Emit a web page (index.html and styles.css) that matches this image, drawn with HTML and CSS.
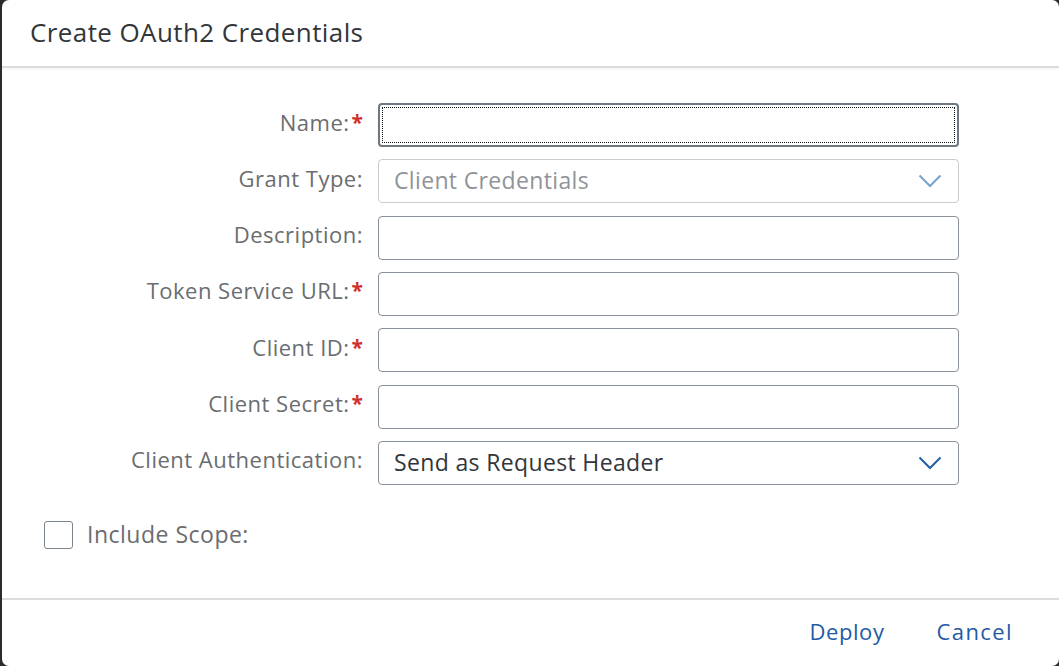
FILE: index.html
```html
<!DOCTYPE html>
<html>
<head>
<meta charset="utf-8">
<link rel="stylesheet" href="styles.css">
</head>
<body>
<div class="dialog">
  <header class="dlg-header">
    <h1 class="dlg-title">Create OAuth2 Credentials</h1>
  </header>
  <main class="dlg-body">
    <div class="form">
      <label class="lbl">Name:<span class="req">*</span></label>
      <div class="field focus"><span class="focus-ring"></span></div>

      <label class="lbl">Grant Type:</label>
      <div class="field select disabled">
        <span class="val">Client Credentials</span>
        <svg class="chev" viewBox="0 0 24 14" width="24" height="14"><path d="M1.5 1.5 L12 12 L22.5 1.5" fill="none" stroke="currentColor" stroke-width="2"/></svg>
      </div>

      <label class="lbl">Description:</label>
      <div class="field"></div>

      <label class="lbl">Token Service URL:<span class="req">*</span></label>
      <div class="field"></div>

      <label class="lbl">Client ID:<span class="req">*</span></label>
      <div class="field"></div>

      <label class="lbl">Client Secret:<span class="req">*</span></label>
      <div class="field"></div>

      <label class="lbl">Client Authentication:</label>
      <div class="field select">
        <span class="val">Send as Request Header</span>
        <svg class="chev" viewBox="0 0 24 14" width="24" height="14"><path d="M1.5 1.5 L12 12 L22.5 1.5" fill="none" stroke="currentColor" stroke-width="2"/></svg>
      </div>
    </div>
    <div class="check-row">
      <span class="checkbox"></span>
      <span class="check-label">Include Scope:</span>
    </div>
  </main>
  <footer class="dlg-footer">
    <button class="btn">Deploy</button>
    <button class="btn btn-wide">Cancel</button>
  </footer>
</div>
</body>
</html>
```
FILE: styles.css
```css
* { box-sizing: border-box; }
html, body { margin: 0; padding: 0; }
body {
  background: #2b2b2b;
  font-family: "Open Sans", "Liberation Sans", sans-serif;
  width: 1059px;
  height: 666px;
  overflow: hidden;
}
.dialog {
  margin-left: 2px;
  width: 1057px;
  height: 666px;
  background: #fff;
  border-radius: 7px;
  display: flex;
  flex-direction: column;
}
.dlg-header {
  height: 68px;
  border-bottom: 2px solid #dcdcdc;
  box-shadow: 0 1px 2px rgba(0,0,0,0.06);
  padding-left: 28px;
  display: flex;
  align-items: center;
}
.dlg-title {
  margin: 0;
  font-size: 26px;
  font-weight: 400;
  color: #32363a;
  letter-spacing: 0.4px;
  padding-bottom: 2px;
}
.dlg-body {
  flex: 1;
  padding-top: 35px;
}
.form {
  display: grid;
  grid-template-columns: 359px 581px;
  column-gap: 15px;
  row-gap: 12.33px;
  padding-left: 2px;
}
.lbl {
  height: 44px;
  display: flex;
  align-items: center;
  justify-content: flex-end;
  font-size: 22px;
  letter-spacing: 0.5px;
  color: #6a6d70;
  padding-bottom: 7px;
}
.req {
  color: #d0312d;
  font-weight: 700;
  margin-left: 2px;
  font-size: 21px;
  letter-spacing: 0;
}
.field {
  height: 44px;
  border: 1px solid #89919a;
  border-radius: 4px;
  position: relative;
  display: flex;
  align-items: center;
  padding: 0 16px 0 15px;
  background: #fff;
}
.field.focus {
  border: 2px solid #6f7780;
}
.focus-ring {
  position: absolute;
  inset: 2px;
  border: 1px dotted #111;
}
.field.disabled {
  border-color: #c9cdd1;
}
.val {
  flex: 1;
  font-size: 23px;
  letter-spacing: 0.35px;
  color: #32363a;
  padding-bottom: 2px;
}
.field.disabled .val { color: #8f9499; }
.chev { color: #1f5fa9; }
.field.disabled .chev { color: #7aa0cf; }
.check-row {
  display: flex;
  align-items: center;
  margin-top: 33px;
  padding-left: 42px;
  gap: 14px;
}
.checkbox {
  width: 29px;
  height: 28px;
  border: 1.5px solid #7c848c;
  border-radius: 3px;
}
.check-label {
  font-size: 23px;
  letter-spacing: 0.5px;
  color: #6a6d70;
  padding-bottom: 2px;
}
.dlg-footer {
  height: 68px;
  border-top: 2px solid #dcdcdc;
  display: flex;
  justify-content: flex-end;
  align-items: center;
  padding-right: 46px;
  gap: 52px;
}
.btn {
  background: none;
  border: none;
  padding: 0 0 4px;
  font-family: inherit;
  font-size: 22px;
  letter-spacing: 0.6px;
  color: #1f5aa6;
  cursor: pointer;
}
.btn-wide { letter-spacing: 1.4px; }
```
